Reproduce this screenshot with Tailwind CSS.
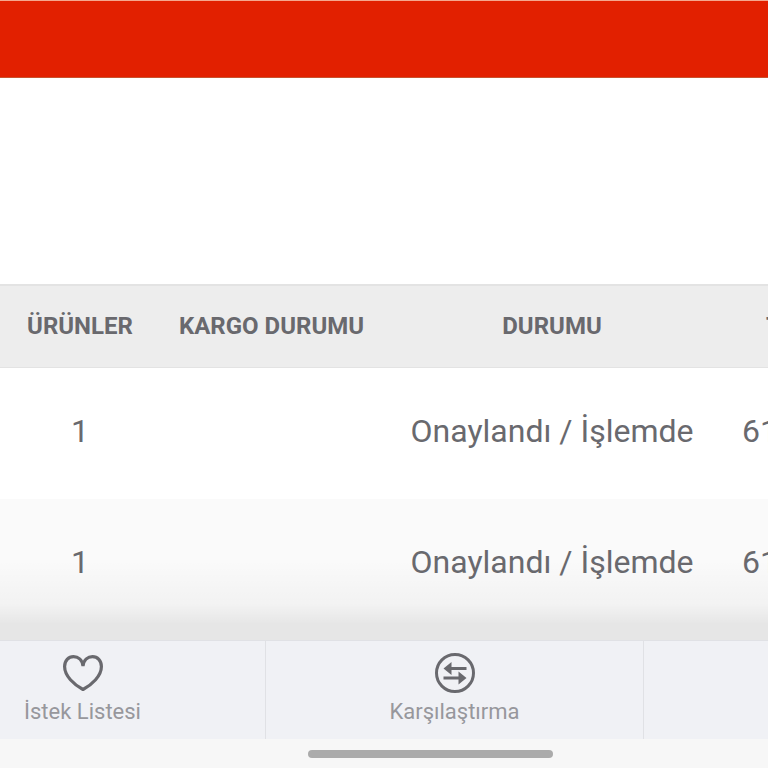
<!DOCTYPE html>
<html lang="tr">
<head>
  <meta charset="UTF-8" />
  <meta name="viewport" content="width=device-width, initial-scale=1.0" />
  <title>Siparişler</title>
  <script src="https://cdn.jsdelivr.net/npm/@tailwindcss/browser@4"></script>
  <style>
    body { font-family: Roboto, "Liberation Sans", sans-serif; }
  </style>
</head>
<body class="bg-white text-[#69696e] min-h-screen flex flex-col overflow-x-hidden">

  <header class="h-[78px] bg-[#e22000] border-t border-b border-t-[#f5a78e] border-b-[#c8532f]"></header>

  <!-- Orders -->
  <main class="flex-1 flex flex-col pt-[206px] overflow-hidden">
    <table class="w-full flex-1 table-fixed border-collapse text-center whitespace-nowrap">
      <thead>
        <tr class="h-[82px] bg-[#ededed] border-t-2 border-b border-[#e3e3e3] text-2xl">
          <th class="w-[160px] p-0 font-bold">ÜRÜNLER</th>
          <th class="w-[223px] p-0 font-bold">KARGO DURUMU</th>
          <th class="w-[338px] p-0 font-bold">DURUMU</th>
          <th class="p-0 pl-[45px] font-bold text-left">T</th>
        </tr>
      </thead>
      <tbody class="text-[32px] leading-10">
        <tr class="h-[132px]">
          <td class="pb-1">1</td>
          <td></td>
          <td class="pb-1">Onaylandı / İşlemde</td>
          <td class="pb-1 pl-[21px] text-left">61</td>
        </tr>
        <tr class="h-[140px] bg-[#fafafa]">
          <td class="pb-4">1</td>
          <td></td>
          <td class="pb-4">Onaylandı / İşlemde</td>
          <td class="pb-4 pl-[21px] text-left">61</td>
        </tr>
      </tbody>
    </table>
  </main>

  <!-- Bottom bar -->
  <footer class="sticky bottom-0">
    <div class="absolute inset-x-0 bottom-full h-20 pointer-events-none bg-linear-to-b from-black/0 via-black/3 via-55% to-black/8 to-80%"></div>
    <nav class="h-[99px] flex bg-[#f0f1f5] border-t border-[#e0e1e5] text-[22px] leading-7 text-[#97979c] whitespace-nowrap overflow-hidden">
      <a href="#" class="w-[266px] shrink-0 pr-[100px] pt-3 flex flex-col items-center gap-[5px] border-r border-[#e0e1e5]">
        <svg class="w-10 h-10 shrink-0 text-[#69696e]" viewBox="0 0 40 40" fill="none" stroke="currentColor" stroke-width="3.200">
          <path d="M20 36.500C11 31.500 1.600 23 1.600 13.500C1.600 7.500 5.500 3.600 10.500 3.600C15 3.600 19.200 6.500 20 13C20.800 6.500 25 3.600 29.500 3.600C34.500 3.600 38.400 7.500 38.400 13.500C38.400 23 29 31.500 20 36.500Z" stroke-linejoin="bevel" />
        </svg>
        İstek Listesi
      </a>
      <a href="#" class="w-[378px] shrink-0 pt-3 flex flex-col items-center gap-[5px] border-r border-[#e0e1e5]">
        <svg class="w-10 h-10 shrink-0 text-[#69696e]" viewBox="0 0 40 40">
          <circle cx="20" cy="20" r="18.500" fill="none" stroke="currentColor" stroke-width="3" />
          <path fill="currentColor" d="M8.500 15.500L16.500 9V14H31.500V17H16.500V22ZM31.500 25L23.500 18.500V23.500H8.500V26.500H23.500V31.500Z" />
        </svg>
        Karşılaştırma
      </a>
    </nav>
    <div class="h-[29px] bg-[#f7f7f7] pt-[11px] pl-[308px]">
      <div class="w-[245px] h-2 rounded-full bg-[#ababab]"></div>
    </div>
  </footer>

</body>
</html>
